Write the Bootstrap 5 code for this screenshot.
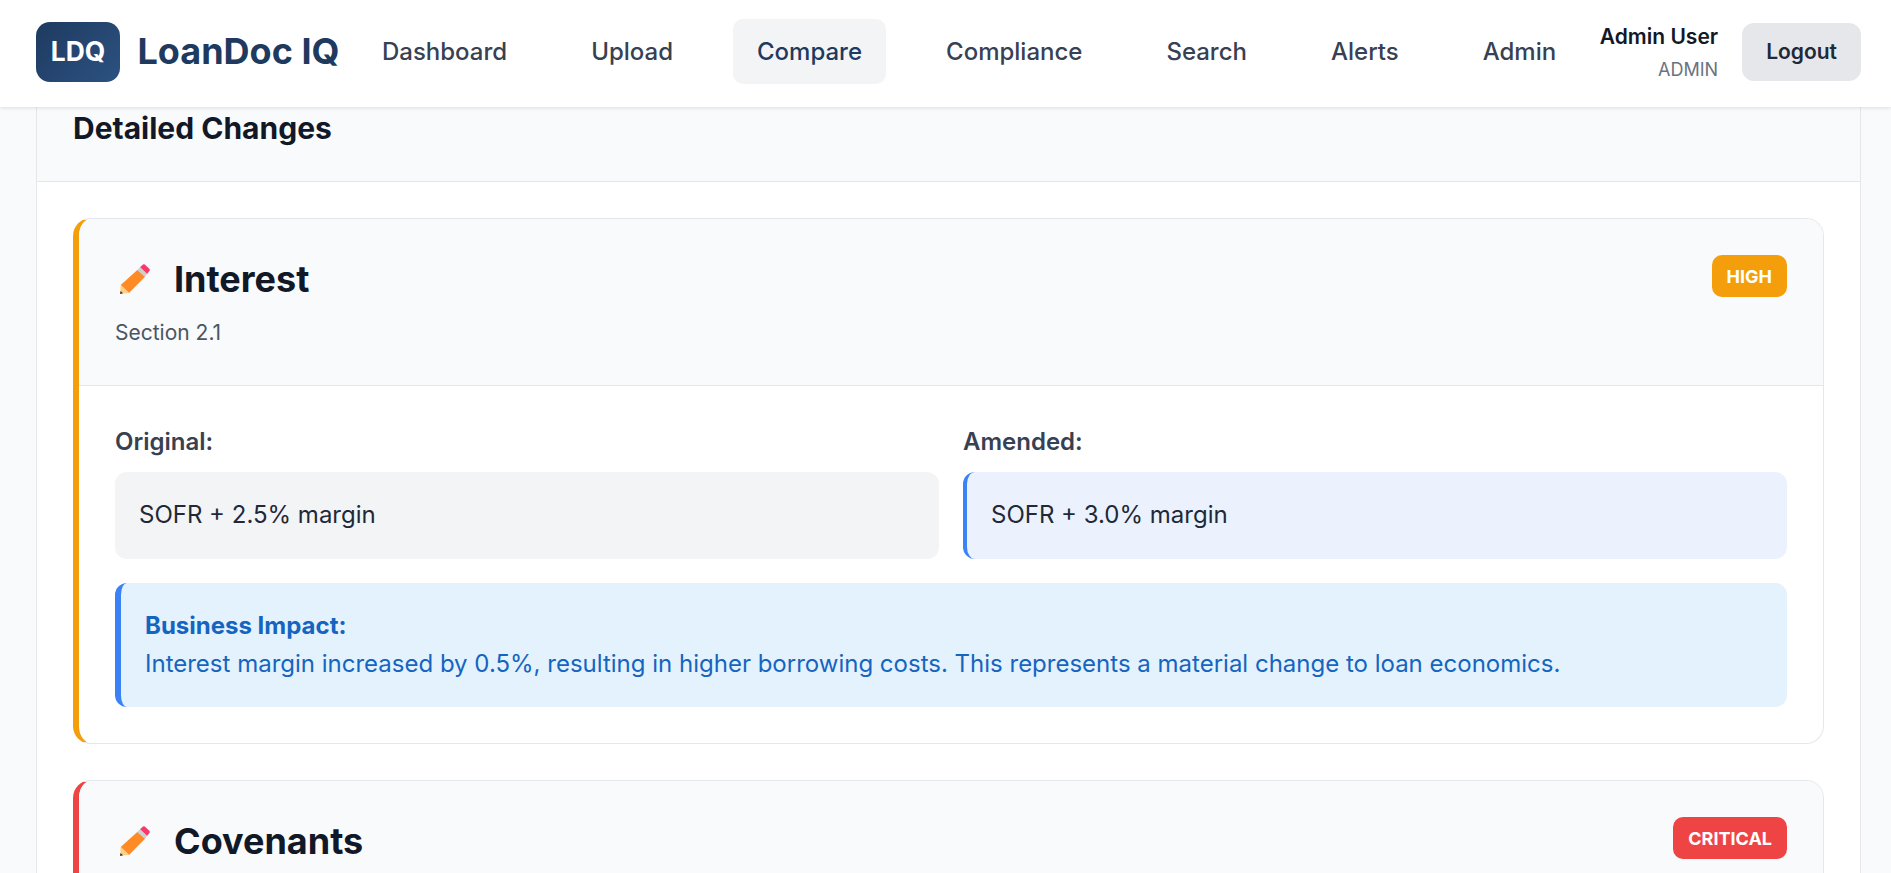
<!DOCTYPE html>
<html lang="en">
<head>
<meta charset="utf-8">
<title>LoanDoc IQ</title>
<link href="https://cdn.jsdelivr.net/npm/bootstrap@5.3.0/dist/css/bootstrap.min.css" rel="stylesheet">
<style>
html,body{height:873px;overflow:hidden}
body{font-family:Inter,"Liberation Sans",sans-serif;background:#f9fafb;color:#111827}
.top-bar{height:107px;padding:0 30px 3px 36px;background:#fff;box-shadow:0 1px 4px rgba(0,0,0,.12);position:relative;z-index:2}
.logo-box{width:84px;height:60px;border-radius:14px;background:linear-gradient(135deg,#1e3a5f,#2c5282);color:#fff;font-weight:700;font-size:26.4px}
.brand-name{font-size:36px;font-weight:700;color:#1e3a5f;margin-left:17.5px;line-height:1.2}
.main-links{gap:36px;margin-left:18.5px;margin-top:-1px}
.main-links a{display:block;padding:18px 24px;font-size:24px;line-height:29px;color:#374151;font-weight:500;border-radius:10px;text-decoration:none}
.main-links a.on{background:#f3f4f6;color:#1e3a5f}
.user-name{font-size:21px;font-weight:600;line-height:1.5;color:#111827}
.user-role{font-size:18px;line-height:1.5;color:#6b7280;margin-top:3px}
.logout-btn{background:#e5e7eb;color:#1f2937;font-weight:600;font-size:21px;border:0;border-radius:12px;padding:0 24px;height:58px;margin-left:24px}
.sheet{margin:0 30px 0 36px;background:#fff;border:solid #e5e7eb;border-width:0 1px}
.sheet-head{height:75px;padding:0 36px;background:#f9fafb;border-bottom:1px solid #e5e7eb}
.sheet-head h2{font-size:30px;font-weight:700;margin:0;line-height:1;padding-top:6px;color:#111827}
.sheet-body{padding:36px}
.change-item{border:1px solid #e5e7eb;border-left:6px solid #f59e0b;border-radius:18px;overflow:hidden;margin-bottom:36px}
.change-item.crit{border-left-color:#ef4444}
.change-head{padding:36px;background:#f9fafb;border-bottom:1px solid #e5e7eb;height:167px}
.change-title{font-size:36px;font-weight:700;line-height:48px;margin:0;color:#111827;gap:24px}
.pencil-icon{margin-left:5px;flex:none}
.change-sec{font-size:21px;color:#4b5563;margin-top:13.5px;line-height:1.5}
.sev{font-size:18px;font-weight:700;color:#fff;border-radius:10px;padding:0 15px;height:42px;background:#f59e0b}
.sev.crit{background:#ef4444}
.change-body{padding:38px 36px 36px}
.diff-row{gap:24px}
.diff-label{font-size:24px;font-weight:600;color:#374151;line-height:1.5;margin-bottom:12px}
.diff-box{height:87px;border-radius:12px;padding:0 24px 2px;font-size:24px;color:#1f2937;background:#f3f4f6}
.diff-box.new{background:#ebf2fe;border-left:4px solid #3b82f6}
.impact{margin-top:24px;height:124px;background:#e3f2fd;border-left:6px solid #3b82f6;border-radius:12px;padding:0 24px;color:#1565c0;font-size:24px;line-height:1.6}
.impact strong{font-weight:700;display:block}
</style>
</head>
<body>
<header class="top-bar d-flex align-items-center justify-content-between">
  <div class="d-flex align-items-center">
    <div class="logo-box d-flex align-items-center justify-content-center">LDQ</div>
    <span class="brand-name">LoanDoc IQ</span>
    <nav class="main-links d-flex">
      <a href="#">Dashboard</a>
      <a href="#">Upload</a>
      <a href="#" class="on">Compare</a>
      <a href="#">Compliance</a>
      <a href="#">Search</a>
      <a href="#">Alerts</a>
      <a href="#">Admin</a>
    </nav>
  </div>
  <div class="d-flex align-items-center">
    <div class="text-end">
      <div class="user-name">Admin User</div>
      <div class="user-role">ADMIN</div>
    </div>
    <button class="btn logout-btn">Logout</button>
  </div>
</header>
<main class="sheet">
  <div class="sheet-head"><h2>Detailed Changes</h2></div>
  <div class="sheet-body">
    <article class="change-item">
      <div class="change-head d-flex justify-content-between align-items-start">
        <div>
          <h3 class="change-title d-flex align-items-center">
            <svg class="pencil-icon" width="30" height="30" viewBox="0 0 30 30" aria-hidden="true"><path fill="#f9396a" d="M20 3.200 23 .5Q24 0 24.800 .5L29.600 5Q30 6 29.600 6.800L27 9.900z"/><path fill="#ccd0d3" d="M17.300 6 20 3.200 27 9.900 25 12.800z"/><path fill="#ff8b26" d="M17.300 6 25 12.800 9 29 .7 21z"/><path fill="#ffcf85" d="M.7 21 9 29 .2 29.800z"/><path fill="#333" d="M.6 27 3 29.200 0 30z"/></svg>
            Interest</h3>
          <div class="change-sec">Section 2.1</div>
        </div>
        <span class="sev d-inline-flex align-items-center">HIGH</span>
      </div>
      <div class="change-body">
        <div class="row g-0 diff-row flex-nowrap">
          <div class="col"><div class="diff-label">Original:</div><div class="diff-box d-flex align-items-center">SOFR + 2.5% margin</div></div>
          <div class="col"><div class="diff-label">Amended:</div><div class="diff-box new d-flex align-items-center">SOFR + 3.0% margin</div></div>
        </div>
        <div class="impact d-flex flex-column justify-content-center">
          <strong>Business Impact:</strong>
          <span>Interest margin increased by 0.5%, resulting in higher borrowing costs. This represents a material change to loan economics.</span>
        </div>
      </div>
    </article>
    <article class="change-item crit">
      <div class="change-head d-flex justify-content-between align-items-start">
        <div>
          <h3 class="change-title d-flex align-items-center">
            <svg class="pencil-icon" width="30" height="30" viewBox="0 0 30 30" aria-hidden="true"><path fill="#f9396a" d="M20 3.200 23 .5Q24 0 24.800 .5L29.600 5Q30 6 29.600 6.800L27 9.900z"/><path fill="#ccd0d3" d="M17.300 6 20 3.200 27 9.900 25 12.800z"/><path fill="#ff8b26" d="M17.300 6 25 12.800 9 29 .7 21z"/><path fill="#ffcf85" d="M.7 21 9 29 .2 29.800z"/><path fill="#333" d="M.6 27 3 29.200 0 30z"/></svg>
            Covenants</h3>
        </div>
        <span class="sev crit d-inline-flex align-items-center">CRITICAL</span>
      </div>
    </article>
  </div>
</main>
</body>
</html>
